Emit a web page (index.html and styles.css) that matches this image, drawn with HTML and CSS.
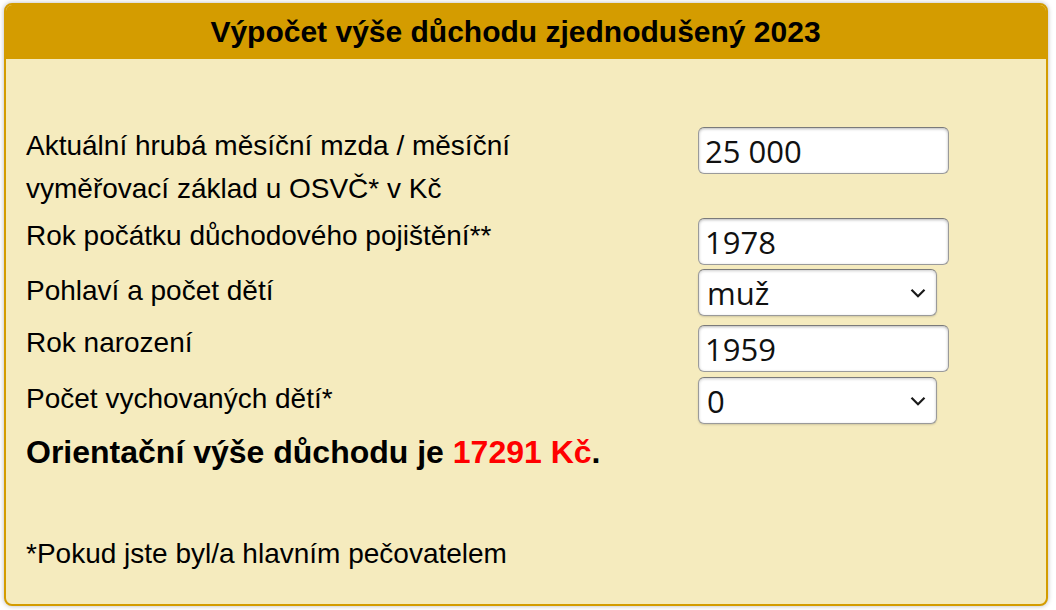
FILE: index.html
```html
<!DOCTYPE html>
<html lang="cs">
<head>
<meta charset="utf-8">
<title>Výpočet výše důchodu zjednodušený 2023</title>
<link rel="stylesheet" href="styles.css">
</head>
<body>
<div class="card">
  <div class="card-header">Výpočet výše důchodu zjednodušený 2023</div>
  <div class="card-body">
    <div class="rows">
      <div class="row row-first">
        <label class="label" for="mzda">Aktuální hrubá měsíční mzda / měsíční<br>vyměřovací základ u OSVČ* v Kč</label>
        <input class="field field-input" id="mzda" type="text" value="25 000">
      </div>
      <div class="row">
        <label class="label" for="rok">Rok počátku důchodového pojištění**</label>
        <input class="field field-input" id="rok" type="text" value="1978">
      </div>
      <div class="row">
        <label class="label" for="pohlavi">Pohlaví a počet dětí</label>
        <div class="select-wrap">
          <select class="field field-select" id="pohlavi"><option>muž</option><option>žena</option></select>
          <svg class="chevron" width="16" height="10" viewBox="0 0 16 10"><path d="M1.5 1.8 L8 8.3 L14.5 1.8" fill="none" stroke="#1a1a1a" stroke-width="2.2"/></svg>
        </div>
      </div>
      <div class="row row-gap">
        <label class="label" for="narozeni">Rok narození</label>
        <input class="field field-input" id="narozeni" type="text" value="1959">
      </div>
      <div class="row row-gap">
        <label class="label" for="deti">Počet vychovaných dětí*</label>
        <div class="select-wrap">
          <select class="field field-select" id="deti"><option>0</option><option>1</option><option>2</option></select>
          <svg class="chevron" width="16" height="10" viewBox="0 0 16 10"><path d="M1.5 1.8 L8 8.3 L14.5 1.8" fill="none" stroke="#1a1a1a" stroke-width="2.2"/></svg>
        </div>
      </div>
    </div>
    <p class="result">Orientační výše důchodu je <span class="amount">17291 Kč</span>.</p>
    <p class="note">*Pokud jste byl/a hlavním pečovatelem</p>
  </div>
</div>
</body>
</html>
```
FILE: styles.css
```css
html, body {
  margin: 0;
  padding: 0;
  background: #ffffff;
}
body {
  font-family: "Liberation Sans", Arial, sans-serif;
  color: #000;
  padding: 3px 8px 4px 4px;
}
.card {
  box-sizing: border-box;
  width: 1044px;
  height: 603px;
  border: 2px solid #d49c00;
  border-radius: 8px;
  background: #f5ebbe;
  overflow: hidden;
  box-shadow: 0 0 5px rgba(0, 0, 0, 0.28);
}
.card-header {
  background: #d49c00;
  height: 54px;
  line-height: 54px;
  text-align: center;
  font-weight: bold;
  font-size: 30px;
  padding-right: 21px;
}
.card-body {
  padding: 65px 20px 0 20px;
}
.rows {
  display: flex;
  flex-direction: column;
  gap: 4px;
}
.row {
  display: grid;
  grid-template-columns: 672px auto;
  align-items: start;
}
.row-gap {
  margin-top: 1px;
}
.label {
  font-size: 28px;
  line-height: 43px;
}
.field {
  box-sizing: border-box;
  height: 47px;
  border: 1px solid #9a9a9a;
  border-top-color: #7a7a7a;
  border-radius: 6px;
  background: #fff;
  box-shadow: inset 0 1px 3px rgba(0, 0, 0, 0.28);
  font-family: "Open Sans", "Noto Sans", sans-serif;
  font-size: 31px;
  color: #111;
  margin: 0;
  outline: none;
}
.field-input {
  width: 251px;
  padding: 0 6px;
  margin-top: 4px;
}
.row-first .field-input {
  margin-top: 3px;
}
.select-wrap {
  position: relative;
  width: 239px;
}
.field-select {
  -webkit-appearance: none;
  appearance: none;
  width: 239px;
  padding: 0 8px;
  box-shadow: inset 0 1px 3px rgba(0, 0, 0, 0.2), 0 1px 2px rgba(0, 0, 0, 0.15);
}
.chevron {
  position: absolute;
  right: 11px;
  top: 19px;
  pointer-events: none;
}
.result {
  margin: 7px 0 0 0;
  font-size: 32px;
  line-height: 43px;
  font-weight: bold;
}
.amount {
  color: #ff0000;
}
.note {
  margin: 58px 0 0 0;
  font-size: 28px;
  line-height: 43px;
}
```
